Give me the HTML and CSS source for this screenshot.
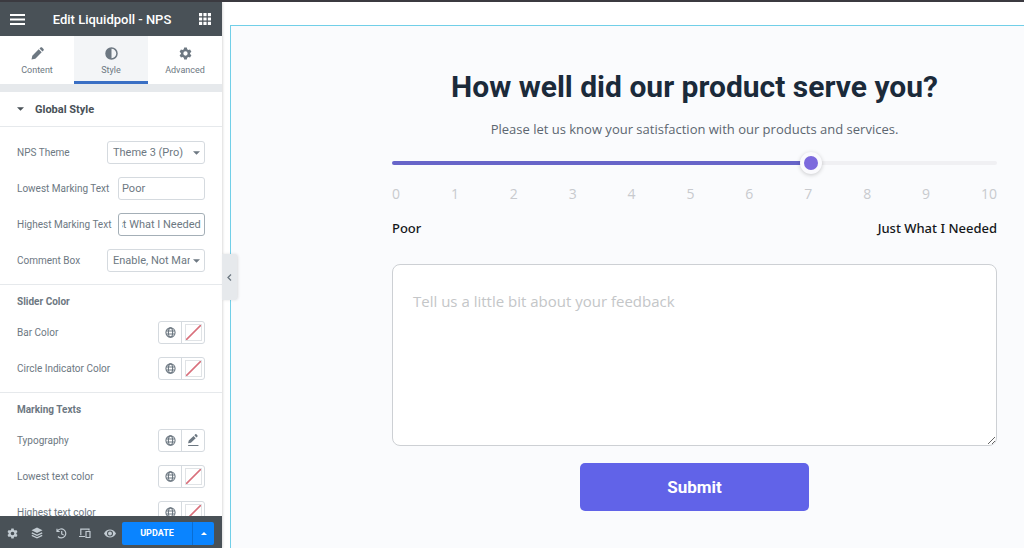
FILE: index.html
```html
<!DOCTYPE html>
<html lang="en">
<head>
    <meta charset="UTF-8">
    <meta name="viewport" content="width=device-width, initial-scale=1.0">
    <title>Edit Liquidpoll - NPS</title>
    <link rel="stylesheet" href="styles.css">
</head>
<body>
    <!-- Shared icons -->
    <svg class="sprite" aria-hidden="true">
        <symbol id="icon-globe" viewBox="0 0 12 12">
            <g fill="none" stroke="currentColor" stroke-width="1.2">
                <circle cx="6" cy="6" r="5"/>
                <ellipse cx="6" cy="6" rx="2.3" ry="5"/>
                <path d="M1.4 4.3h9.2M1.4 7.7h9.2"/>
            </g>
        </symbol>
        <symbol id="icon-gear" viewBox="0 0 24 24">
            <path fill="currentColor" fill-rule="evenodd" d="M9.5 1h5l.7 3.3 2 1.1 3.2-1 2.5 4.2L20.4 11v2l2.5 2.4-2.5 4.2-3.2-1-2 1.1-.7 3.3h-5l-.7-3.3-2-1.1-3.2 1-2.5-4.2L3.6 13v-2L1.1 8.600l2.500-4.200 3.200 1 2-1.100zM12 8a4 4 0 1 0 0 8 4 4 0 0 0 0-8z"/>
        </symbol>
        <symbol id="icon-caret" viewBox="0 0 8 4">
            <path fill="currentColor" d="M0 0h8L4 4z"/>
        </symbol>
    </svg>

    <aside class="panel">
        <header class="panel-header">
            <button class="icon-button" type="button" aria-label="Menu">
                <svg width="15" height="11" viewBox="0 0 15 11"><path fill="currentColor" d="M0 0h15v2H0zM0 4.500h15v2H0zM0 9h15v2H0z"/></svg>
            </button>
            <h1 class="panel-title">Edit Liquidpoll - NPS</h1>
            <button class="icon-button" type="button" aria-label="Widgets">
                <svg width="12" height="12" viewBox="0 0 12 12"><path fill="currentColor" d="M0 0h3.200v3.200H0zM4.400 0h3.200v3.200H4.400zM8.800 0H12v3.200H8.800zM0 4.400h3.200v3.200H0zM4.400 4.400h3.200v3.200H4.400zM8.800 4.400H12v3.200H8.800zM0 8.800h3.200V12H0zM4.400 8.800h3.200V12H4.400zM8.800 8.800H12V12H8.800z"/></svg>
            </button>
        </header>

        <nav class="tabs">
            <button class="tab" type="button">
                <svg width="13" height="13" viewBox="0 0 13 13"><path fill="currentColor" d="M.5 12.500l.8-3.800 6.400-6.400 3 3-6.400 6.400zM8.500 1.500l1-1c.5-.5 1.100-.5 1.600 0l1.400 1.400c.5.5.5 1.100 0 1.600l-1 1z"/></svg>
                Content
            </button>
            <button class="tab active" type="button">
                <svg width="13" height="13" viewBox="0 0 13 13"><circle cx="6.500" cy="6.500" r="5.500" fill="none" stroke="currentColor" stroke-width="1.500"/><path fill="currentColor" d="M6.500 1a5.500 5.500 0 0 0 0 11z"/></svg>
                Style
            </button>
            <button class="tab" type="button">
                <svg width="13" height="13"><use href="#icon-gear"/></svg>
                Advanced
            </button>
        </nav>

        <div class="panel-body">
            <button class="section-toggle" type="button">
                <svg width="7" height="4"><use href="#icon-caret"/></svg>
                Global Style
            </button>

            <div class="group group-first">
                <div class="control">
                    <label for="nps_theme">NPS Theme</label>
                    <div class="select-wrap">
                        <select id="nps_theme" class="field">
                            <option>Theme 3 (Pro)</option>
                        </select>
                        <svg width="7" height="4"><use href="#icon-caret"/></svg>
                    </div>
                </div>
                <div class="control">
                    <label for="lowest_text">Lowest Marking Text</label>
                    <input id="lowest_text" class="field" type="text" value="Poor">
                </div>
                <div class="control">
                    <label for="highest_text">Highest Marking Text</label>
                    <input id="highest_text" class="field field-current" type="text" value="Just What I Needed">
                </div>
                <div class="control">
                    <label for="comment_box">Comment Box</label>
                    <div class="select-wrap">
                        <select id="comment_box" class="field">
                            <option>Enable, Not Mandatory</option>
                        </select>
                        <svg width="7" height="4"><use href="#icon-caret"/></svg>
                    </div>
                </div>
            </div>

            <div class="group">
                <h2 class="group-title">Slider Color</h2>
                <div class="control">
                    <span>Bar Color</span>
                    <div class="picker">
                        <button type="button" aria-label="Global color"><svg width="11" height="11"><use href="#icon-globe"/></svg></button>
                        <button type="button" aria-label="Bar color"><span class="swatch"></span></button>
                    </div>
                </div>
                <div class="control">
                    <span>Circle Indicator Color</span>
                    <div class="picker">
                        <button type="button" aria-label="Global color"><svg width="11" height="11"><use href="#icon-globe"/></svg></button>
                        <button type="button" aria-label="Circle indicator color"><span class="swatch"></span></button>
                    </div>
                </div>
            </div>

            <div class="group">
                <h2 class="group-title">Marking Texts</h2>
                <div class="control">
                    <span>Typography</span>
                    <div class="picker">
                        <button type="button" aria-label="Global typography"><svg width="11" height="11"><use href="#icon-globe"/></svg></button>
                        <button type="button" aria-label="Edit typography">
                            <svg width="12" height="12" viewBox="0 0 11 11"><path fill="currentColor" d="M1 8.500l.6-2.500L6 1.800l2 2L3.600 8zM6.700 1.200L7.600.3c.3-.3.7-.3 1 0l1 1c.3.3.3.7 0 1l-.9.9zM1 10h9.500v1H1z"/></svg>
                        </button>
                    </div>
                </div>
                <div class="control">
                    <span>Lowest text color</span>
                    <div class="picker">
                        <button type="button" aria-label="Global color"><svg width="11" height="11"><use href="#icon-globe"/></svg></button>
                        <button type="button" aria-label="Lowest text color"><span class="swatch"></span></button>
                    </div>
                </div>
                <div class="control">
                    <span>Highest text color</span>
                    <div class="picker">
                        <button type="button" aria-label="Global color"><svg width="11" height="11"><use href="#icon-globe"/></svg></button>
                        <button type="button" aria-label="Highest text color"><span class="swatch"></span></button>
                    </div>
                </div>
            </div>
        </div>

        <footer class="panel-footer">
            <div class="tools">
                <button type="button" aria-label="Settings"><svg width="11" height="11"><use href="#icon-gear"/></svg></button>
                <button type="button" aria-label="Navigator">
                    <svg width="12" height="12" viewBox="0 0 12 12"><path fill="currentColor" d="M6 .5l5.500 2.700L6 5.900.5 3.200z"/><path fill="none" stroke="currentColor" stroke-width="1.300" d="M.8 5.800L6 8.300l5.200-2.500M.8 8.300L6 10.800l5.200-2.500"/></svg>
                </button>
                <button type="button" aria-label="History">
                    <svg width="11" height="11" viewBox="0 0 11 11"><path fill="none" stroke="currentColor" stroke-width="1.200" d="M1.500 3A4.500 4.500 0 1 1 2 8.500M1 .8v2.700h2.700M5.700 3v3l2 1"/></svg>
                </button>
                <button type="button" aria-label="Responsive mode">
                    <svg width="12" height="11" viewBox="0 0 12 11"><path fill="none" stroke="currentColor" stroke-width="1.200" d="M10 2.500V1.200H1.800v6M0 8.500h6M7 3.500h4v6H7z"/></svg>
                </button>
                <button type="button" aria-label="Preview">
                    <svg width="12" height="9" viewBox="0 0 12 9"><path fill="currentColor" fill-rule="evenodd" d="M0 4.500C1.300 2 3.500.5 6 .5s4.700 1.500 6 4c-1.300 2.500-3.500 4-6 4s-4.700-1.500-6-4zM6 1.500a3 3 0 1 0 0 6 3 3 0 0 0 0-6z"/><circle cx="6" cy="4.500" r="1.900" fill="currentColor"/></svg>
                </button>
            </div>
            <button class="update" type="button">UPDATE</button>
            <button class="update-more" type="button" aria-label="Save options"><svg class="flip" width="6" height="3"><use href="#icon-caret"/></svg></button>
        </footer>

        <button class="collapse" type="button" aria-label="Hide panel">
            <svg width="5" height="7" viewBox="0 0 5 7"><path fill="none" stroke="currentColor" stroke-width="1.300" d="M4 .5l-3 3 3 3"/></svg>
        </button>
    </aside>

    <main class="preview">
        <section class="widget">
            <form class="poll">
                <h2 class="poll-title">How well did our product serve you?</h2>
                <p class="poll-text">Please let us know your satisfaction with our products and services.</p>
                <input class="slider" type="range" min="0" max="10" value="7" aria-label="Score">
                <div class="scale">
                    <span>0</span><span>1</span><span>2</span><span>3</span><span>4</span><span>5</span><span>6</span><span>7</span><span>8</span><span>9</span><span>10</span>
                </div>
                <div class="marks">
                    <span>Poor</span>
                    <span>Just What I Needed</span>
                </div>
                <textarea class="feedback" aria-label="Feedback" placeholder="Tell us a little bit about your feedback"></textarea>
                <button class="submit" type="button">Submit</button>
            </form>
        </section>
    </main>

    <script src="script.js"></script>
</body>
</html>
```
FILE: styles.css
```css
* {
    box-sizing: border-box;
}
body {
    margin: 0;
    height: 100vh;
    display: flex;
    overflow: hidden;
    border-top: 2px solid #3b3a40;
    background-color: #fff;
    font-family: Roboto, sans-serif;
    font-size: 11px;
    color: #6d7882;
}
button,
input,
select,
textarea {
    font: inherit;
    color: inherit;
}
button {
    display: flex;
    align-items: center;
    justify-content: center;
    padding: 0;
    border: 0;
    background: none;
    cursor: pointer;
}
.sprite {
    position: absolute;
    width: 0;
    height: 0;
}

/* Panel */
.panel {
    position: relative;
    z-index: 1;
    display: flex;
    flex-direction: column;
    flex: 0 0 222px;
    min-width: 0;
    background-color: #fff;
    box-shadow: 0 0 3px rgba(0, 0, 0, 0.25);
}
.panel-header {
    display: flex;
    align-items: center;
    justify-content: space-between;
    flex: none;
    height: 34px;
    padding: 0 11px 0 10px;
    background-color: #495157;
    color: #fff;
}
.panel-title {
    margin: 0;
    font-size: 13px;
    font-weight: 500;
}
.tabs {
    display: flex;
    flex: none;
    height: 48px;
}
.tab {
    flex: 1;
    flex-direction: column;
    gap: 4px;
    padding-top: 6px;
    border-bottom: 3px solid transparent;
    font-size: 9px;
    line-height: 12px;
}
.tab.active {
    border-bottom-color: #3a6fc4;
    background-color: #f3f5f7;
}
.panel-body {
    flex: 1;
    min-height: 0;
    overflow: hidden;
    border-top: 8px solid #e6e9ec;
}
.section-toggle {
    width: 100%;
    height: 35px;
    justify-content: flex-start;
    gap: 11px;
    padding-left: 17px;
    border-bottom: 1px solid #e6e9ec;
    color: #495157;
    font-weight: 700;
}
.group {
    padding: 0 17px 6px;
    border-bottom: 1px solid #e6e9ec;
}
.group-first {
    padding-top: 7px;
}
.group-title {
    margin: 0;
    padding-top: 9px;
    height: 29px;
    font-size: 10px;
    line-height: 16px;
    font-weight: 700;
}
.control {
    display: flex;
    align-items: center;
    justify-content: space-between;
    gap: 4px;
    height: 36px;
    font-size: 10px;
}
.control label {
    white-space: nowrap;
}
.field {
    width: 98px;
    height: 23px;
    border: 1px solid #d5dadf;
    border-radius: 3px;
    background-color: #fff;
    font-size: 11px;
    outline: 0;
}
input.field {
    flex: 0 1 87px;
    min-width: 0;
    padding: 0 3px;
}
.field-current {
    border-color: #a4afb7;
}
.select-wrap {
    position: relative;
    display: flex;
}
.select-wrap .field {
    appearance: none;
    padding: 0 14px 0 5px;
}
.select-wrap svg {
    position: absolute;
    top: 10px;
    right: 5px;
    pointer-events: none;
}
.picker {
    display: flex;
    width: 47px;
    height: 23px;
    border: 1px solid #d5dadf;
    border-radius: 3px;
}
.picker button {
    flex: 1;
}
.picker button + button {
    border-left: 1px solid #d5dadf;
}
.swatch {
    width: 17px;
    height: 17px;
    border: 1px solid #e0e3e6;
    background: linear-gradient(to bottom right, transparent 46%, #d9707c 47%, #d9707c 53%, transparent 54%);
}
.panel-footer {
    display: flex;
    align-items: center;
    flex: none;
    height: 32px;
    padding: 2px 8px 0 0;
    background-color: #495157;
    color: #fff;
}
.tools {
    display: flex;
    flex: 1;
    color: #c2cbd2;
}
.tools button {
    flex: 1;
}
.update {
    width: 70px;
    height: 23px;
    border-radius: 2px 0 0 2px;
    background-color: #0a84ff;
    font-size: 9px;
    font-weight: 700;
}
.update-more {
    width: 22px;
    height: 23px;
    border-left: 1px solid #0a6dd2;
    border-radius: 0 2px 2px 0;
    background-color: #0a84ff;
}
.flip {
    transform: rotate(180deg);
}
.collapse {
    position: absolute;
    top: 252px;
    left: 100%;
    width: 15px;
    height: 46px;
    border-radius: 0 3px 3px 0;
    background-color: #e6e9ec;
    box-shadow: 1px 0 3px rgba(0, 0, 0, 0.12);
}

/* Preview */
.preview {
    display: flex;
    flex: 1;
    min-width: 0;
    padding: 23px 0 0 8px;
}
.widget {
    flex: 1;
    min-width: 0;
    padding: 43px 27px 0 161px;
    border-top: 1px solid #71cfe8;
    border-left: 1px solid #71cfe8;
    background-color: #fafbfd;
    font-family: "Open Sans", "Noto Sans", sans-serif;
}
.poll {
    display: flex;
    flex-direction: column;
}
.poll-title {
    margin: 0;
    color: #1b2a3a;
    font-family: Roboto, sans-serif;
    font-size: 30px;
    line-height: 36px;
    font-weight: 700;
    text-align: center;
}
.poll-text {
    margin: 14px 0 0;
    color: #5c6670;
    font-size: 13px;
    line-height: 20px;
    text-align: center;
}
.slider {
    appearance: none;
    width: 100%;
    height: 22px;
    margin: 13px 0 0;
    background: none;
}
.slider::-webkit-slider-runnable-track {
    height: 4px;
    border-radius: 2px;
    background: linear-gradient(to right, #6765c9 70%, #f0f0f3 70%);
}
.slider::-webkit-slider-thumb {
    appearance: none;
    width: 22px;
    height: 22px;
    margin-top: -9px;
    border: 4px solid #fafafd;
    border-radius: 50%;
    background-color: #7c69dd;
    box-shadow: 0 1px 4px rgba(0, 0, 0, 0.2);
}
.scale {
    display: flex;
    justify-content: space-between;
    margin-top: 10px;
    color: #c8cace;
    font-size: 14px;
    line-height: 20px;
}
.marks {
    display: flex;
    justify-content: space-between;
    margin-top: 14px;
    color: #15171a;
    font-family: "Noto Sans", sans-serif;
    font-size: 13px;
    line-height: 20px;
    font-weight: 500;
}
.feedback {
    width: 100%;
    height: 182px;
    margin-top: 26px;
    padding: 25px 20px;
    border: 1px solid #cdd0d4;
    border-radius: 8px;
    background-color: #fff;
    color: #5c6670;
    font-size: 15px;
    line-height: 22px;
}
.feedback::placeholder {
    color: #c4c6c8;
}
.submit {
    align-self: center;
    width: 229px;
    height: 48px;
    margin-top: 17px;
    border-radius: 5px;
    background-color: #6163e8;
    color: #fff;
    font-family: Roboto, sans-serif;
    font-size: 17px;
    font-weight: 700;
}
```
FILE: script.js
```js
// Keep the end of a long value in view
const highestText = document.getElementById('highest_text');
highestText.scrollLeft = highestText.scrollWidth;
```
